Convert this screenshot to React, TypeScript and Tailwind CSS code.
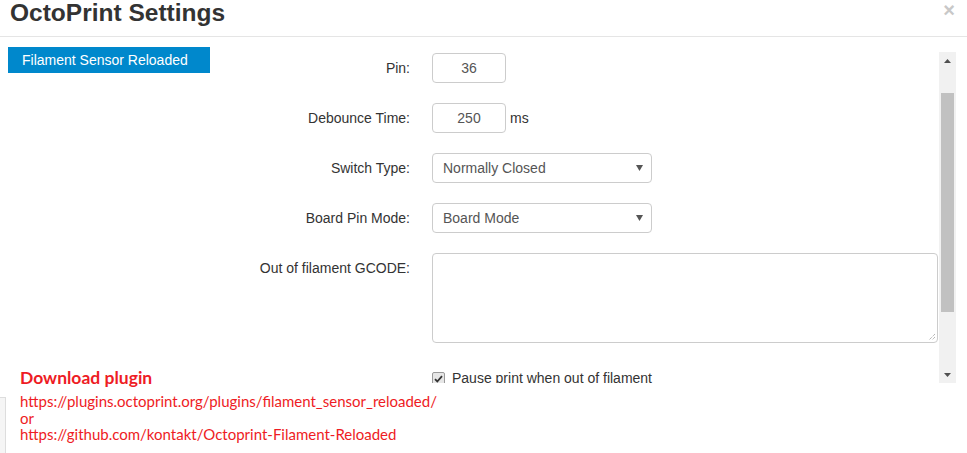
import React from 'react';

function Arrow() {
  return (
    <svg width="7" height="6" viewBox="0 0 7 6" className="shrink-0">
      <path d="M0 0h7L3.5 6z" fill="#555" />
    </svg>
  );
}

function Row({ label, children }: { label: string; children: React.ReactNode }) {
  return (
    <div className="flex items-start mb-[20px]">
      <label className="w-[190px] shrink-0 text-right pt-[5px] leading-[20px] text-[14px] text-[#333]">{label}</label>
      <div className="ml-[22px] flex items-start">{children}</div>
    </div>
  );
}

function Select({ value }: { value: string }) {
  return (
    <div className="w-[220px] h-[30px] border border-[#ccc] rounded-[4px] bg-white flex items-center justify-between pl-[10px] pr-[8px] text-[14px] text-[#555]">
      <span>{value}</span>
      <Arrow />
    </div>
  );
}

function NumInput({ value }: { value: string }) {
  return (
    <div className="w-[74px] h-[30px] border border-[#ccc] rounded-[4px] bg-white text-center leading-[28px] text-[14px] text-[#555]">
      {value}
    </div>
  );
}

export default function App() {
  return (
    <div className="relative w-[967px] h-[453px] overflow-hidden bg-white text-[#333] font-['Liberation_Sans',Arial,sans-serif]">
      {/* Header */}
      <div className="h-[37px] flex justify-between border-b border-[#e5e5e5] pl-[10px]">
        <h3 className="text-[24.5px] font-bold leading-[25px] text-[#333]">OctoPrint Settings</h3>
        <span className="mr-[12px] text-[20px] font-bold leading-[20px] text-[#c8c8c8]">×</span>
      </div>

      {/* Body */}
      <div className="flex pl-[8px] h-[346px]">
        <div className="mt-[10px] w-[202px] h-[26px] bg-[#0088cc] text-white text-[14px] leading-[26px] pl-[14px] shrink-0">
          Filament Sensor Reloaded
        </div>

        <div className="ml-[10px] mt-[15px] w-[736px] h-[331px] flex overflow-hidden">
          <div className="flex-1 pt-[1px] overflow-hidden">
            <Row label="Pin:">
              <NumInput value="36" />
            </Row>
            <Row label="Debounce Time:">
              <NumInput value="250" />
              <span className="ml-[4px] pt-[5px] leading-[20px] text-[14px] text-[#333]">ms</span>
            </Row>
            <Row label="Switch Type:">
              <Select value="Normally Closed" />
            </Row>
            <Row label="Board Pin Mode:">
              <Select value="Board Mode" />
            </Row>
            <Row label="Out of filament GCODE:">
              <div className="relative w-[506px] h-[90px] border border-[#ccc] rounded-[4px] bg-white">
                <svg width="9" height="9" viewBox="0 0 9 9" className="absolute right-[1px] bottom-[1px]">
                  <path d="M8 2L2 8M8 5L5 8" stroke="#999" strokeWidth="1" strokeDasharray="1 1" />
                </svg>
              </div>
            </Row>
            <div className="flex items-start pl-[212px] pt-[5px]">
              <span className="mt-[4px] w-[13px] h-[13px] border border-[#999] rounded-[2px] bg-[#e6e6e6] flex items-center justify-center">
                <svg width="9" height="8" viewBox="0 0 9 8">
                  <path d="M1 4.2l2.3 2.3L8 1.2" stroke="#333" strokeWidth="1.8" fill="none" />
                </svg>
              </span>
              <span className="ml-[7px] leading-[20px] text-[14px] text-[#333]">Pause print when out of filament</span>
            </div>
          </div>

          {/* Scrollbar */}
          <div className="w-[17px] h-full bg-[#f1f1f1] flex flex-col items-center shrink-0">
            <div className="h-[17px] flex items-center justify-center">
              <svg width="7" height="4" viewBox="0 0 7 4">
                <path d="M0 4L3.5 0L7 4z" fill="#505050" />
              </svg>
            </div>
            <div className="mt-[24px] w-[13px] h-[219px] bg-[#c1c1c1]" />
            <div className="flex-1" />
            <div className="h-[17px] flex items-center justify-center">
              <svg width="7" height="4" viewBox="0 0 7 4">
                <path d="M0 0h7L3.5 4z" fill="#505050" />
              </svg>
            </div>
          </div>
        </div>
      </div>

      {/* Footer remnant */}
      <div className="flex h-[70px]">
        <div className="mt-[14px] w-[6px] bg-[#f5f5f5] border-t border-r border-[#ddd]" />
      </div>

      {/* Annotation */}
      <div className="absolute left-[20px] top-[366px] font-['Lato',sans-serif] text-[#ee1c24]">
        <div className="text-[17.5px] font-bold leading-[24px]">Download plugin</div>
        <div className="text-[15px] leading-[16.5px] mt-[3px]">
          <div>https://plugins.octoprint.org/plugins/filament_sensor_reloaded/</div>
          <div>or</div>
          <div>https://github.com/kontakt/Octoprint-Filament-Reloaded</div>
        </div>
      </div>
    </div>
  );
}
